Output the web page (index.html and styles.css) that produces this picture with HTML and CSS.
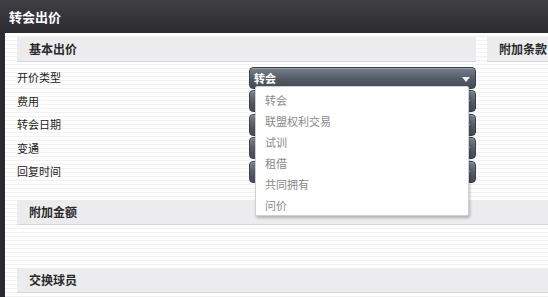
FILE: index.html
```html
<!DOCTYPE html>
<html>
<head>
<meta charset="UTF-8">
<title>转会出价</title>
<link rel="stylesheet" href="styles.css">
</head>
<body>
	<div class="window">
		<div class="titlebar">转会出价</div>
		<div class="content">
			<div class="top">
				<div class="col">
					<div class="head">基本出价</div>
					<div class="rows">
						<div class="row"><span>开价类型</span><div class="select">转会</div></div>
						<div class="row"><span>费用</span><div class="select"></div></div>
						<div class="row"><span>转会日期</span><div class="select"></div></div>
						<div class="row"><span>变通</span><div class="select"></div></div>
						<div class="row"><span>回复时间</span><div class="select"></div></div>
						<ul class="menu">
							<li>转会</li>
							<li>联盟权利交易</li>
							<li>试训</li>
							<li>租借</li>
							<li>共同拥有</li>
							<li>问价</li>
						</ul>
					</div>
				</div>
				<div class="col">
					<div class="head">附加条款</div>
				</div>
			</div>
			<div class="head wide extra">附加金额</div>
			<div class="head wide swap">交换球员</div>
		</div>
	</div>
</body>
</html>
```

FILE: styles.css
```css
html, body { margin: 0; height: 100%; overflow: hidden; }
body { font-family: "Noto Sans CJK SC", "Noto Sans", sans-serif; font-size: 11px; color: #222; background: #2b2b2f; }
.window { height: 100%; display: flex; flex-direction: column; }
.titlebar { height: 33px; flex: none; box-sizing: border-box; padding: 0 9px; line-height: 34px; font-size: 13px; font-weight: bold; color: #fff; background: linear-gradient(#404044, #2c2c30); }
.content { flex: 1; margin-left: 5px; padding: 4px 0 0 12px; background: repeating-linear-gradient(#fff 0 3px, #f1f1f1 3px 4px); }
.top { display: grid; grid-template-columns: 459px 1fr; gap: 11px; }
.head { height: 24px; line-height: 24px; padding-left: 12px; background: #ececee; border-bottom: 1px solid #d7d7da; font-size: 12px; font-weight: bold; color: #2a2a2a; white-space: nowrap; }
.rows { position: relative; padding-top: 4px; }
.row { height: 23.5px; display: flex; align-items: center; justify-content: space-between; }
.row span { padding-bottom: 1px; }
.select { position: relative; width: 227px; height: 22px; box-sizing: border-box; border: 1px solid #3a4149; border-radius: 4px; background: linear-gradient(#78818b, #525b66 55%, #434b55); box-shadow: inset 0 1px 0 rgba(255,255,255,0.25); color: #fff; font-weight: bold; font-size: 11px; line-height: 20px; padding-left: 4px; }
.select::after { content: ""; position: absolute; right: 5px; top: 9px; border-left: 4px solid transparent; border-right: 4px solid transparent; border-top: 5px solid #f2f2f2; }
.menu { position: absolute; left: 238px; top: 24px; width: 214px; margin: 0; padding: 3px 0 0; list-style: none; background: #fff; border: 1px solid #d0d0d0; border-radius: 2px; box-shadow: 1px 2px 3px rgba(0,0,0,0.25); box-sizing: border-box; height: 130px; }
.menu li { height: 21px; line-height: 21px; padding-left: 9px; color: #8a8a8a; }
.wide { margin-top: 16.5px; }
.swap { margin-top: 43px; }
```
